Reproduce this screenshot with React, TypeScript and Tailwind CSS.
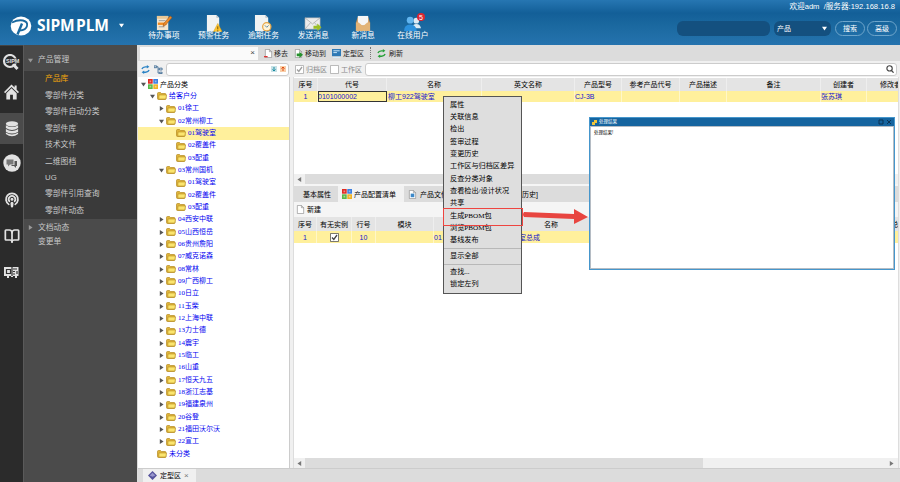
import React from 'react';
import { Podcast, BookOpen } from 'lucide-react';

type TreeItem = { label: string; level: number; open?: boolean; leaf?: boolean; selected?: boolean };

const tree: TreeItem[] = [
  { label: '给客户分', level: 1, open: true },
  { label: '01徐工', level: 2 },
  { label: '02常州柳工', level: 2, open: true },
  { label: '01驾驶室', level: 3, leaf: true, selected: true },
  { label: '02覆盖件', level: 3, leaf: true },
  { label: '03配重', level: 3, leaf: true },
  { label: '03常州国机', level: 2, open: true },
  { label: '01驾驶室', level: 3, leaf: true },
  { label: '02覆盖件', level: 3, leaf: true },
  { label: '03配重', level: 3, leaf: true },
  { label: '04西安中联', level: 2 },
  { label: '05山西恒岳', level: 2 },
  { label: '06贵州詹阳', level: 2 },
  { label: '07威克诺森', level: 2 },
  { label: '08常林', level: 2 },
  { label: '09广西柳工', level: 2 },
  { label: '10日立', level: 2 },
  { label: '11玉柴', level: 2 },
  { label: '12上海中联', level: 2 },
  { label: '13力士德', level: 2 },
  { label: '14震宇', level: 2 },
  { label: '15临工', level: 2 },
  { label: '16山重', level: 2 },
  { label: '17恒天九五', level: 2 },
  { label: '18浙江志基', level: 2 },
  { label: '19福建泉州', level: 2 },
  { label: '20谷登', level: 2 },
  { label: '21福田沃尔沃', level: 2 },
  { label: '22宣工', level: 2 },
  { label: '未分类', level: 1, leaf: true },
];

const levelPadding: Record<number, string> = {
  1: 'pl-[10px]',
  2: 'pl-[19px]',
  3: 'pl-[29px]',
};

const sideItems = ['产品库', '零部件分类', '零部件自动分类', '零部件库', '技术文件', '二维图档', 'UG', '零部件引用查询', '零部件动态'];

const menuGroups = [
  ['属性', '关联信息', '检出', '签审过程', '变更历史', '工作区与归档区差异', '反查分类对象', '查看检出/设计状况', '共享', '生成PBOM包', '浏览PBOM包', '基线发布'],
  ['显示全部'],
  ['查找...', '锁定左列'],
];

const topColumns = [
  { label: '序号', width: 'w-[24px]', value: '1', cell: 'text-center' },
  { label: '代号', width: 'w-[69px]', value: '0101000002', cell: 'outline outline-1 -outline-offset-1 outline-[#333]' },
  { label: '名称', width: 'w-[95px]', value: '柳工922驾驶室', cell: 'pl-px' },
  { label: '英文名称', width: 'w-[93px]', value: '', cell: '' },
  { label: '产品型号', width: 'w-[47px]', value: 'CJ-3B', cell: '' },
  { label: '参考产品代号', width: 'w-[58px]', value: '', cell: '' },
  { label: '产品描述', width: 'w-[47px]', value: '', cell: '' },
  { label: '备注', width: 'w-[94px]', value: '', cell: '' },
  { label: '创建者', width: 'w-[46px]', value: '张苏琪', cell: '' },
  { label: '修改者', width: 'w-[48px]', value: '', cell: '' },
];

const bottomColumns = [
  { label: '序号', width: 'w-[23px]', value: '1' },
  { label: '有无实例', width: 'w-[35px]', value: 'check' },
  { label: '行号', width: 'w-[24px]', value: '10' },
  { label: '模块', width: 'w-[58px]', value: '' },
  { label: '', width: 'w-[71px]', value: '01' },
  { label: '名称', width: 'w-[93px]', value: '驾驶室总成' },
  { label: '', width: 'w-[286px]', value: '' },
  { label: '总量', width: 'w-[30px]', value: '' },
];

const Arrow = ({ open = false, className = '' }: { open?: boolean; className?: string }) => (
  <svg viewBox="0 0 6 6" className={`w-[5px] h-[5px] flex-shrink-0 ${className}`}>
    <path d={open ? 'M0 1h6L3 5.5z' : 'M1 0v6l4.500-3z'} fill="currentColor" />
  </svg>
);

const Folder = () => (
  <svg viewBox="0 0 10 8" className="w-[10px] h-[8px] flex-shrink-0">
    <path d="M.5 1.500Q.5.5 1.500.5h2l1 1h3.500q1 0 1 1v4q0 1-1 1H1.500q-1 0-1-1z" fill="#dfb43a" stroke="#b48a20" strokeWidth=".7" />
    <path d="M2 3h7.500L8.800 7H1.800z" fill="#fbe56e" stroke="#b98d22" strokeWidth=".6" />
  </svg>
);

const ColorGrid = () => (
  <svg viewBox="0 0 10 10" className="w-[10px] h-[10px] flex-shrink-0">
    <path d="M0 0h4.700v4.700H0z" fill="#e02b22" />
    <path d="M5.300 0H10v4.700H5.300z" fill="#3b7fe0" />
    <path d="M0 5.300h4.700V10H0z" fill="#58b947" />
    <path d="M5.300 5.300H10V10H5.300z" fill="#f0b323" />
    <path d="M1.500 1.500h1.700v1.700H1.500zM6.800 1.500h1.700v1.700H6.800zM1.500 6.800h1.700v1.700H1.500zM6.800 6.800h1.700v1.700H6.800z" fill="#fff" opacity=".45" />
  </svg>
);

const Page = ({ children }: { children?: React.ReactNode }) => (
  <svg viewBox="0 0 10 10" className="w-[9px] h-[9px] flex-shrink-0">
    <path d="M1.500.5h4.500l2.500 2.500v6.500h-7z" fill="#fff" stroke="#888" strokeWidth=".7" />
    <path d="M6 .5V3h2.500" fill="none" stroke="#888" strokeWidth=".7" />
    {children}
  </svg>
);

const Refresh = ({ color }: { color: string }) => (
  <svg viewBox="0 0 10 10" className="w-[9px] h-[9px] flex-shrink-0" fill="none" stroke={color} strokeWidth="1.500">
    <path d="M1 4.500Q2 2 4.800 2h2.500" />
    <path d="M9 5.500Q8 8 5.200 8H2.700" />
    <path d="M6.500 0 9.300 2 6.500 4zM3.500 6 .7 8l2.800 2z" fill={color} stroke="none" />
  </svg>
);

const CheckBox = ({ checked = false, muted = false }: { checked?: boolean; muted?: boolean }) => (
  <svg viewBox="0 0 9 9" className={`w-[9px] h-[9px] flex-shrink-0 ${muted ? 'text-[#a0a0a0]' : 'text-[#444]'}`}>
    <path d="M.5.5h8v8h-8z" fill="#fff" stroke="currentColor" strokeWidth=".7" />
    {checked && <path d="M2 4.500 3.800 6.500 7 2" fill="none" stroke="currentColor" strokeWidth="1.300" />}
  </svg>
);

const Scrollbar = ({ thumb }: { thumb: string }) => (
  <div className="flex items-center h-[10px] bg-[#f0f0f0] text-[#777] flex-shrink-0">
    <Arrow className="rotate-180 mx-[3px]" />
    <div className={`h-full bg-[#dcdcdc] ${thumb}`} />
    <Arrow className="ml-auto mr-[4px]" />
  </div>
);

const headerActions = [
  {
    label: '待办事项',
    icon: (
      <>
        <path d="M2 1h12v15H2z" fill="#f4e6cf" />
        <path d="M2 1h12v3H2z" fill="#e9c795" />
        <path d="M4 6h7M4 12.500h6" stroke="#999" />
        <path d="M3 8h9v2.500H3z" fill="#f28a1e" />
        <path d="m8.500 12 .8-3L16 1l2 1.700-6.800 8z" fill="#ee8b28" stroke="#96511a" strokeWidth=".6" />
      </>
    ),
  },
  {
    label: '预警任务',
    icon: (
      <>
        <path d="M2 0h10l3 3v14H2z" fill="#f1f3f3" />
        <path d="M12 0v3h3z" fill="#b8c2c8" />
        <path d="m13.500 9 4.500 8.500H9z" fill="#ffc52d" stroke="#d69a16" strokeWidth=".5" />
        <path d="M13.500 12v3M13.500 15.700v1" stroke="#765300" />
      </>
    ),
  },
  {
    label: '逾期任务',
    icon: (
      <>
        <path d="M1 0h11l3 3v14H1z" fill="#f1f3f3" />
        <path d="M12 0v3h3z" fill="#b8c2c8" />
        <circle cx="13.500" cy="12.500" r="4.400" fill="#fff4d8" stroke="#e6a647" strokeWidth="1.300" />
        <path d="m11.500 11 2 2 2-2" fill="none" stroke="#5686a8" />
      </>
    ),
  },
  {
    label: '发送消息',
    icon: (
      <>
        <path d="M1 3h16v12H1z" fill="#ececec" stroke="#aaa" strokeWidth=".6" />
        <path d="m1 3 8 6.500L17 3M1 15l6-7M17 15l-6-7" fill="none" stroke="#aaa" strokeWidth=".8" />
        <path d="M10 11.500h4V9l4.500 4-4.500 4v-2.500h-4z" fill="#9bbf25" />
      </>
    ),
  },
  {
    label: '新消息',
    icon: (
      <>
        <path d="m2 8 2-6h11l2 6v9H2z" fill="#c89052" />
        <path d="M4 1h11v10H4z" fill="#f6f6f6" />
        <path d="M2 8h3l4.500 4L14 8h3v9H2z" fill="#e3b477" />
      </>
    ),
  },
  {
    label: '在线用户',
    icon: (
      <>
        <circle cx="13" cy="6" r="3" fill="#dcebf5" />
        <path d="M9 14q0-4.500 4-4.500t5 4.500z" fill="#dcebf5" />
        <circle cx="6.500" cy="5.500" r="3.600" fill="#62b5ef" />
        <path d="M0 17q0-7 6.500-7t7 7z" fill="#2c91dd" />
      </>
    ),
  },
];

const Header = () => (
  <header className="relative flex h-[45px] flex-shrink-0 bg-[linear-gradient(180deg,#2676b2_0%,#135f98_29%,#1a689f_55%,#2573ae_100%)] text-white">
    <div className="flex items-center w-[139px] pl-[10px] pt-[6px]">
      <svg viewBox="0 0 22 20" className="w-[22px] h-[20px] flex-shrink-0">
        <ellipse cx="11" cy="10" rx="10.300" ry="9.500" fill="#fff" />
        <path d="M2 6.500Q8 3.500 13 4.500q5 1.200 4 5.500t-7.500 4.500" fill="none" stroke="#1a699f" strokeWidth="1.800" />
        <path d="M12 7.500 7.500 18.500" fill="none" stroke="#1a699f" strokeWidth="2.400" />
      </svg>
      <span className="ml-[5px] w-[74px] text-[15.5px] font-bold leading-none whitespace-nowrap font-['Open_Sans','Noto_Sans',sans-serif] tracking-[-0.1px] [word-spacing:-2.5px]">SIPM PLM</span>
      <Arrow open className="ml-[8px]" />
    </div>
    <div className="flex pt-[15px]">
      {headerActions.map((action) => (
        <div key={action.label} className="flex flex-col items-center w-[49.8px]">
          <svg viewBox="0 0 19 18" className="w-[18px] h-[17px]">{action.icon}</svg>
          <span className="text-[7.8px] leading-[8px] whitespace-nowrap">{action.label}</span>
        </div>
      ))}
    </div>
    <span className="absolute left-[417px] top-[13px] flex items-center justify-center w-[8px] h-[8px] rounded-full bg-[#dc2630] text-[7px] leading-none">5</span>
    <div className="flex flex-col items-end flex-1 pr-[3px]">
      <div className="h-[21px] pt-[2px] pr-[2px] text-[7.6px] leading-[9px] whitespace-pre">欢迎adm  /服务器:192.168.16.8</div>
      <div className="flex h-[15px] text-[7px]">
        <div className="w-[93px] rounded-[6px] bg-[#14507f]" />
        <div className="flex items-center justify-between w-[57px] ml-[4px] pl-[3px] pr-[4px] rounded-[6px] bg-[#14507f]">
          产品
          <Arrow open />
        </div>
        <div className="flex items-center justify-center w-[30px] ml-[4px] rounded-full border border-[#6ea5cb]">搜索</div>
        <div className="flex items-center justify-center w-[30px] ml-[2px] rounded-full border border-[#6ea5cb]">高级</div>
      </div>
    </div>
  </header>
);

const Rail = () => (
  <nav className="flex flex-col items-center w-[23px] flex-shrink-0 bg-[#2b2b2b] text-[#e2e2e2] border-t border-[#444]">
    <div className="flex items-center justify-center h-[31px] w-full">
      <svg viewBox="0 0 19 16" className="w-[19px] h-[16px]">
        <circle cx="8" cy="7" r="6" fill="none" stroke="currentColor" strokeWidth="2.200" />
        <path d="m11 10 4.500 5" stroke="currentColor" strokeWidth="3" />
        <path d="M4 4.500h15v5H4z" fill="#2b2b2b" />
        <text x="4" y="9" fontSize="5.500" fontWeight="700" fill="currentColor" fontFamily="Liberation Sans, sans-serif">SIPM</text>
      </svg>
    </div>
    <div className="flex items-center justify-center h-[29px] w-full">
      <svg viewBox="0 0 16 16" className="w-[15px] h-[16px]" fill="currentColor">
        <path d="M8 0 0 8l1.200 1.200L8 2.600l6.800 6.600L16 8l-2.500-2.500V1h-2.200v2.300z" />
        <path d="m8 4-5.500 5.300V16h4v-5h3v5h4V9.300z" />
      </svg>
    </div>
    <div className="flex items-center justify-center h-[38px] w-full bg-[#4b4b4b] border-t-[7px] border-[#2b2b2b]">
      <svg viewBox="0 0 14 17" className="w-[14px] h-[16px]" fill="currentColor">
        <ellipse cx="7" cy="3" rx="6.500" ry="2.800" />
        <path d="M.5 4.500Q7 8.500 13.500 4.500v3Q7 11.500.5 7.500zM.5 8.500q6.500 4 13 0v2.800q-6.500 4-13 0zM.5 12.300q6.500 4 13 0v1.500q-6.500 5-13 0z" />
      </svg>
    </div>
    <div className="flex items-center justify-center h-[38px] w-full">
      <svg viewBox="0 0 18 18" className="w-[18px] h-[18px]">
        <circle cx="9" cy="9" r="8.700" fill="currentColor" />
        <path d="M3.500 5.500h7v5H7l-2 2v-2H3.500z" fill="#777" />
        <path d="M11.500 7H14v5h-1v2l-2-2H8.500v-1h3z" fill="#555" />
      </svg>
    </div>
    <div className="flex items-center justify-center h-[36px] w-full">
      <Podcast size={16} strokeWidth={2.6} />
    </div>
    <div className="flex items-center justify-center h-[36px] w-full">
      <BookOpen size={16} strokeWidth={2.6} />
    </div>
    <div className="flex items-center justify-center h-[37px] w-full">
      <svg viewBox="0 0 15 11" className="w-[15px] h-[11px]">
        <path d="M0 0h14.500v9H13v2h-2V9H9v1H7V9H5v2H3V9H0z" fill="currentColor" />
        <path d="M2.500 2.500h4v4h-4zM9 2h4M9 4.500h2M13 4v3M9 7h2M8 0v9" fill="none" stroke="#333" strokeWidth="1.200" />
      </svg>
    </div>
  </nav>
);

const Sidebar = () => (
  <aside className="flex flex-col w-[114px] flex-shrink-0 bg-[#4b4b4b] text-[#c8c8c8] text-[7.8px] leading-none border-l border-[#5a5a5a]">
    <div className="flex items-center h-[26px] pl-[4px] pt-[4px]">
      <Arrow open className="text-[#999] mr-[5px]" />
      产品管理
    </div>
    <div className="h-[148px] bg-[#3a3a3a]">
      {sideItems.map((item, i) => (
        <div key={item} className={`flex items-center h-[16.44px] pl-[21px] ${i === 0 ? 'text-[#f5a80a]' : ''}`}>
          {item}
        </div>
      ))}
    </div>
    <div className="flex items-center h-[16px] pl-[4px] pt-px">
      <Arrow className="text-[#999] mr-[5px]" />
      文档动态
    </div>
    <div className="flex items-center h-[14px] pl-[14px]">变更单</div>
  </aside>
);

const TreePanel = () => (
  <div className="w-[152px] flex-shrink-0 bg-white border-r border-[#ccc] pt-px overflow-hidden">
    <div className="flex items-center h-[12.33px] pl-[3px] text-black">
      <Arrow open className="text-[#555] mr-[2px]" />
      <ColorGrid />
      <span className="ml-[2px]">产品分类</span>
    </div>
    {tree.map((item, i) => (
      <div
        key={i}
        className={`flex items-center h-[12.33px] whitespace-nowrap text-[#0000f0] font-['Liberation_Serif','Noto_Sans_CJK_SC',serif] ${levelPadding[item.level]} ${item.selected ? 'bg-[#fff09c]' : ''}`}
      >
        <span className="flex items-center w-[9px] pl-[2px] text-[#555]">{!item.leaf && <Arrow open={item.open} />}</span>
        <Folder />
        <span className="ml-[2px]">{item.label}</span>
      </div>
    ))}
  </div>
);

const Toolbar = () => (
  <>
    <div className="flex items-center h-[16px] bg-[#dcdcdc] flex-shrink-0">
      <div className="flex items-center justify-end w-[118px] h-[13px] ml-[2px] pr-[3px] bg-[#fafafa] text-[#444] text-[8px]">×</div>
      <div className="flex items-center ml-[6px] gap-[1px]">
        <Page><path d="M0 8.500h4" stroke="#d33" strokeWidth="1.500" /></Page>
        移去
      </div>
      <div className="flex items-center ml-[6px] gap-[2px]">
        <Page><path d="M3 5h3V3l4 3.500L6 10V8H3z" fill="#26912c" /></Page>
        移动到
      </div>
      <div className="flex items-center ml-[6px] gap-[2px]">
        <svg viewBox="0 0 10 10" className="w-[9px] h-[9px]">
          <path d="M0 0h10v8H0z" fill="#2e79b5" />
          <path d="M1.500 2h7M1.500 4h4M1 9.500h8" stroke="#d7efff" />
        </svg>
        定型区
      </div>
      <div className="h-[12px] ml-[6px] border-l border-dotted border-[#777]" />
      <div className="flex items-center ml-[6px] gap-[3px]">
        <Refresh color="#27a038" />
        刷新
      </div>
    </div>
    <div className="flex items-center h-[16px] bg-[#f0f0f0] flex-shrink-0 text-[#888]">
      <div className="flex items-center w-[28px] pl-[3px] gap-[4px]">
        <Refresh color="#2b83c5" />
        <svg viewBox="0 0 10 10" className="w-[9px] h-[9px]" fill="none" stroke="#426e96">
          <path d="M0 1h3v2H0zM6 3.500h3v2H6zM6 8h3v1.500H6zM3 2h1.500v7H6M4.500 4.500H6" />
        </svg>
      </div>
      <div className="flex items-center justify-end w-[123px] h-[13px] pr-[2px] gap-[3px] rounded-[3px] border border-[#ccc] bg-white">
        <svg viewBox="0 0 6 6" className="w-[6px] h-[6px]"><path d="M0 0h6v6H0z" fill="#c6e1e6" /><path d="M3 1v4M1.500 3.500 3 5l1.500-1.500" fill="none" stroke="#178aa0" /></svg>
        <svg viewBox="0 0 6 6" className="w-[6px] h-[6px]"><path d="M0 0h6v6H0z" fill="#f9cfa8" /><path d="M3 5V1M1.500 2.500 3 1l1.500 1.500" fill="none" stroke="#e04a10" /></svg>
      </div>
      <div className="flex items-center ml-[6px] gap-[2px]"><CheckBox checked muted />归档区</div>
      <div className="flex items-center ml-[3px] gap-[2px]"><CheckBox muted />工作区</div>
      <div className="flex items-center justify-end flex-1 h-[13px] ml-[3px] mr-[3px] pr-[2px] rounded-[3px] border border-[#ccc] bg-white">
        <svg viewBox="0 0 9 9" className="w-[8px] h-[8px]" fill="none" stroke="#444" strokeWidth="1.300">
          <circle cx="4" cy="3.800" r="3" />
          <path d="m6 6 2.500 2.700" />
        </svg>
      </div>
    </div>
  </>
);

const Workspace = () => (
  <div className="flex flex-col flex-1 min-w-0 ml-[3px] mr-[1px] bg-white border-x border-[#ddd]">
    <div className="flex flex-col h-[107px] flex-shrink-0 pt-px overflow-hidden">
      <div className="flex h-[13px] bg-[#e4e4e4] text-black flex-shrink-0">
        {topColumns.map((col) => (
          <div key={col.label} className={`flex items-center justify-center flex-shrink-0 whitespace-nowrap border-r border-[#eee] ${col.width}`}>{col.label}</div>
        ))}
      </div>
      <div className="flex h-[11px] bg-[#fff09c] text-[#1515cf] flex-shrink-0">
        {topColumns.map((col) => (
          <div key={col.label} className={`leading-[11px] flex-shrink-0 whitespace-nowrap border-r border-[#fff7c8] ${col.width} ${col.cell}`}>{col.value}</div>
        ))}
      </div>
      <div className="flex-1" />
      <Scrollbar thumb="w-[410px]" />
    </div>
    <div className="flex h-[18px] flex-shrink-0 bg-[#dcdcdc] border-t-2 border-[#f5f5f5] text-black">
      <div className="flex items-center justify-center w-[44px]"><span className="ml-[2px]">基本属性</span></div>
      <div className="flex items-center w-[66px] pl-[4px] gap-[2px] bg-[#f2f2f2]"><ColorGrid />产品配置清单</div>
      <div className="flex items-center w-[54px] pl-[4px] gap-[3px]">
        <Page><path d="M3 4h4v4H3z" fill="#3c88c8" /></Page>
        产品文件
      </div>
      <div className="flex items-center justify-end w-[80px] whitespace-nowrap">[变更历史]</div>
    </div>
    <div className="flex items-center h-[15px] flex-shrink-0 bg-[#f5f5f5] text-black pl-[2px] gap-[2px]"><Page />新建</div>
    <div className="flex h-[14px] flex-shrink-0 bg-[#e4e4e4] text-black overflow-hidden">
      {bottomColumns.map((col) => (
        <div key={col.width} className={`flex items-center justify-center flex-shrink-0 whitespace-nowrap border-r border-[#eee] ${col.width}`}>{col.label}</div>
      ))}
    </div>
    <div className="flex h-[12px] flex-shrink-0 bg-[#fff09c] text-[#1515cf] overflow-hidden">
      {bottomColumns.map((col, i) => (
        <div key={col.width} className={`flex items-center flex-shrink-0 whitespace-nowrap border-r border-[#fff7c8] ${i < 4 ? 'justify-center' : ''} ${col.width}`}>
          {col.value === 'check' ? <CheckBox checked /> : col.value}
        </div>
      ))}
    </div>
    <div className="flex-1" />
    <Scrollbar thumb="w-[398px]" />
  </div>
);

const ContextMenu = () => (
  <div className="absolute left-[443px] top-[96px] w-[79px] h-[198px] pt-[2px] bg-[#dedede] border border-[#555] text-black font-['Liberation_Serif','Noto_Sans_CJK_SC',serif]">
    {menuGroups.map((group, i) => (
      <div key={i} className={i > 0 ? 'border-t border-[#b8b8b8] mt-[1.5px] pt-[1px]' : ''}>
        {group.map((label) => (
          <div key={label} className="flex items-center h-[12.33px] pl-[6px] text-[7.15px] whitespace-nowrap">{label}</div>
        ))}
      </div>
    ))}
  </div>
);

const ResultDialog = () => (
  <div className="absolute left-[589px] top-[117px] flex flex-col w-[306px] h-[153px] bg-white border border-[#4596cc]">
    <div className="flex items-center h-[8px] flex-shrink-0 px-[2px] bg-[#15649f] text-white text-[4.5px] leading-none">
      <svg viewBox="0 0 5 5" className="w-[5px] h-[5px] mr-[2px]"><path d="M0 2h2V0h3v3H3v2H0z" fill="#f0c53a" /></svg>
      处理结果
      <svg viewBox="0 0 14 6" className="w-[14px] h-[6px] ml-auto" fill="none" stroke="#0a3355"><path d="M1 1h4v4H1zM9 1l4 4M13 1 9 5" /></svg>
    </div>
    <div className="flex-1 border border-[#b5bcc4] pl-[3px] pt-[3px] text-[4.5px] leading-[6px] text-black">处理结果!</div>
  </div>
);

const App: React.FC = () => {
  return (
    <div className="relative flex flex-col w-[900px] h-[482px] overflow-hidden bg-[#f0f0f0] text-[7px] leading-none font-['Liberation_Sans','Noto_Sans_CJK_SC',sans-serif]">
      <Header />
      <div className="flex flex-1 min-h-0">
        <Rail />
        <Sidebar />
        <main className="flex flex-col flex-1 min-w-0 text-[#222] border-l border-[#ddd]">
          <Toolbar />
          <div className="flex flex-1 min-h-0">
            <TreePanel />
            <Workspace />
          </div>
          {/* Bottom tab */}
          <div className="flex h-[14px] flex-shrink-0 pl-[5px] bg-[#dcdcdc] border-t border-[#ccc]">
            <div className="flex items-center w-[53px] pl-[5px] gap-[3px] bg-[#f0f0f0] text-black">
              <svg viewBox="0 0 8 8" className="w-[9px] h-[9px]"><path d="m4 0 4 4-4 4-4-4z" fill="#55539c" /><path d="m4 1.500 2.500 2.500L4 5 1.500 4z" fill="#9896cc" /></svg>
              定型区
              <span className="text-[#777] text-[8px]">×</span>
            </div>
          </div>
        </main>
      </div>

      <ContextMenu />
      <ResultDialog />

      {/* Highlight and arrow */}
      <div className="absolute left-[443px] top-[208px] w-[80px] h-[18px] border border-[#ee4540]" />
      <svg viewBox="0 0 66 20" className="absolute left-[523px] top-[206px] w-[66px] h-[20px]">
        <path d="M1 6l50 2V3l14 8-14 7v-5L1 11q-2-2.500 0-5z" fill="#e84540" />
      </svg>
    </div>
  );
};

export default App;
